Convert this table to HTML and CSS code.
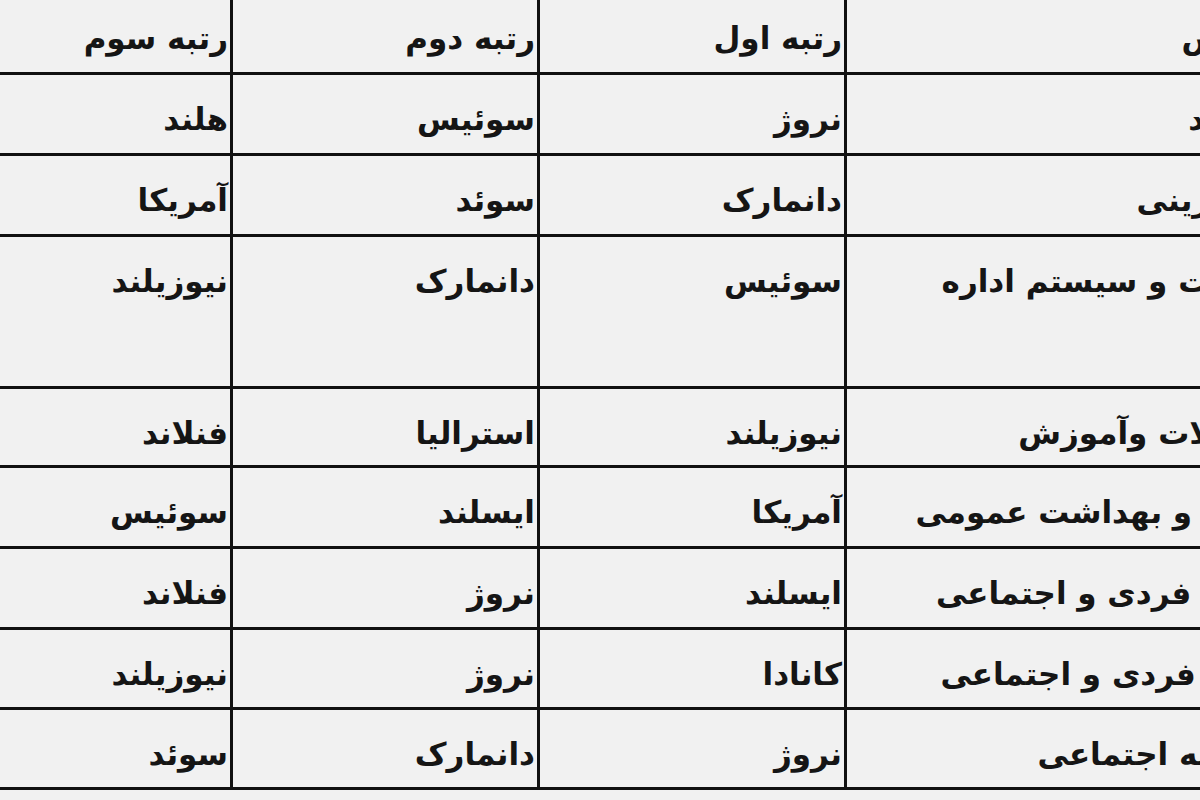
FILE: index.html
```html
<!DOCTYPE html>
<html lang="fa">
<head>
<meta charset="utf-8">
<title>رتبه‌بندی کشورها</title>
<link rel="stylesheet" href="styles.css">
</head>
<body>
<div class="viewport">
  <div class="grid" dir="rtl">
    <div class="cell name">مقیاس</div>
    <div class="cell">رتبه اول</div>
    <div class="cell">رتبه دوم</div>
    <div class="cell">رتبه سوم</div>

    <div class="cell name">اقتصاد</div>
    <div class="cell">نروژ</div>
    <div class="cell">سوئیس</div>
    <div class="cell">هلند</div>

    <div class="cell name">کارآفرینی</div>
    <div class="cell">دانمارک</div>
    <div class="cell">سوئد</div>
    <div class="cell">آمریکا</div>

    <div class="cell name">حکومت و سیستم اداره</div>
    <div class="cell">سوئیس</div>
    <div class="cell">دانمارک</div>
    <div class="cell">نیوزیلند</div>

    <div class="cell name">تحصیلات وآموزش</div>
    <div class="cell">نیوزیلند</div>
    <div class="cell">استرالیا</div>
    <div class="cell">فنلاند</div>

    <div class="cell name">ایمنی و بهداشت عمومی</div>
    <div class="cell">آمریکا</div>
    <div class="cell">ایسلند</div>
    <div class="cell">سوئیس</div>

    <div class="cell name">امنیت فردی و اجتماعی</div>
    <div class="cell">ایسلند</div>
    <div class="cell">نروژ</div>
    <div class="cell">فنلاند</div>

    <div class="cell name">آزادی فردی و اجتماعی</div>
    <div class="cell">کانادا</div>
    <div class="cell">نروژ</div>
    <div class="cell">نیوزیلند</div>

    <div class="cell name">سرمایه اجتماعی</div>
    <div class="cell">نروژ</div>
    <div class="cell">دانمارک</div>
    <div class="cell">سوئد</div>
  </div>
</div>
</body>
</html>
```

FILE: styles.css
```css
html, body {
  margin: 0;
  padding: 0;
  background: #f1f1f1;
}

.viewport {
  width: 1200px;
  height: 800px;
  overflow: hidden;
  background: #f1f1f1;
}

.grid {
  display: grid;
  direction: rtl;
  width: max-content;
  margin-left: -77px;
  margin-top: -9px;
  padding: 3px;
  gap: 3px;
  background: #111;
  grid-template-columns: 445px 304px 304px 304px;
  grid-template-rows: 78px 78px 78px 149px 76px 78px 78px 77px 77px;
  font-family: "DejaVu Sans", sans-serif;
  font-size: 31px;
  font-weight: bold;
  color: #151515;
}

.cell {
  background: #f1f1f1;
  text-align: right;
  padding: 25px 2px 0 0;
  line-height: 38px;
  white-space: nowrap;
  overflow: hidden;
}
```
